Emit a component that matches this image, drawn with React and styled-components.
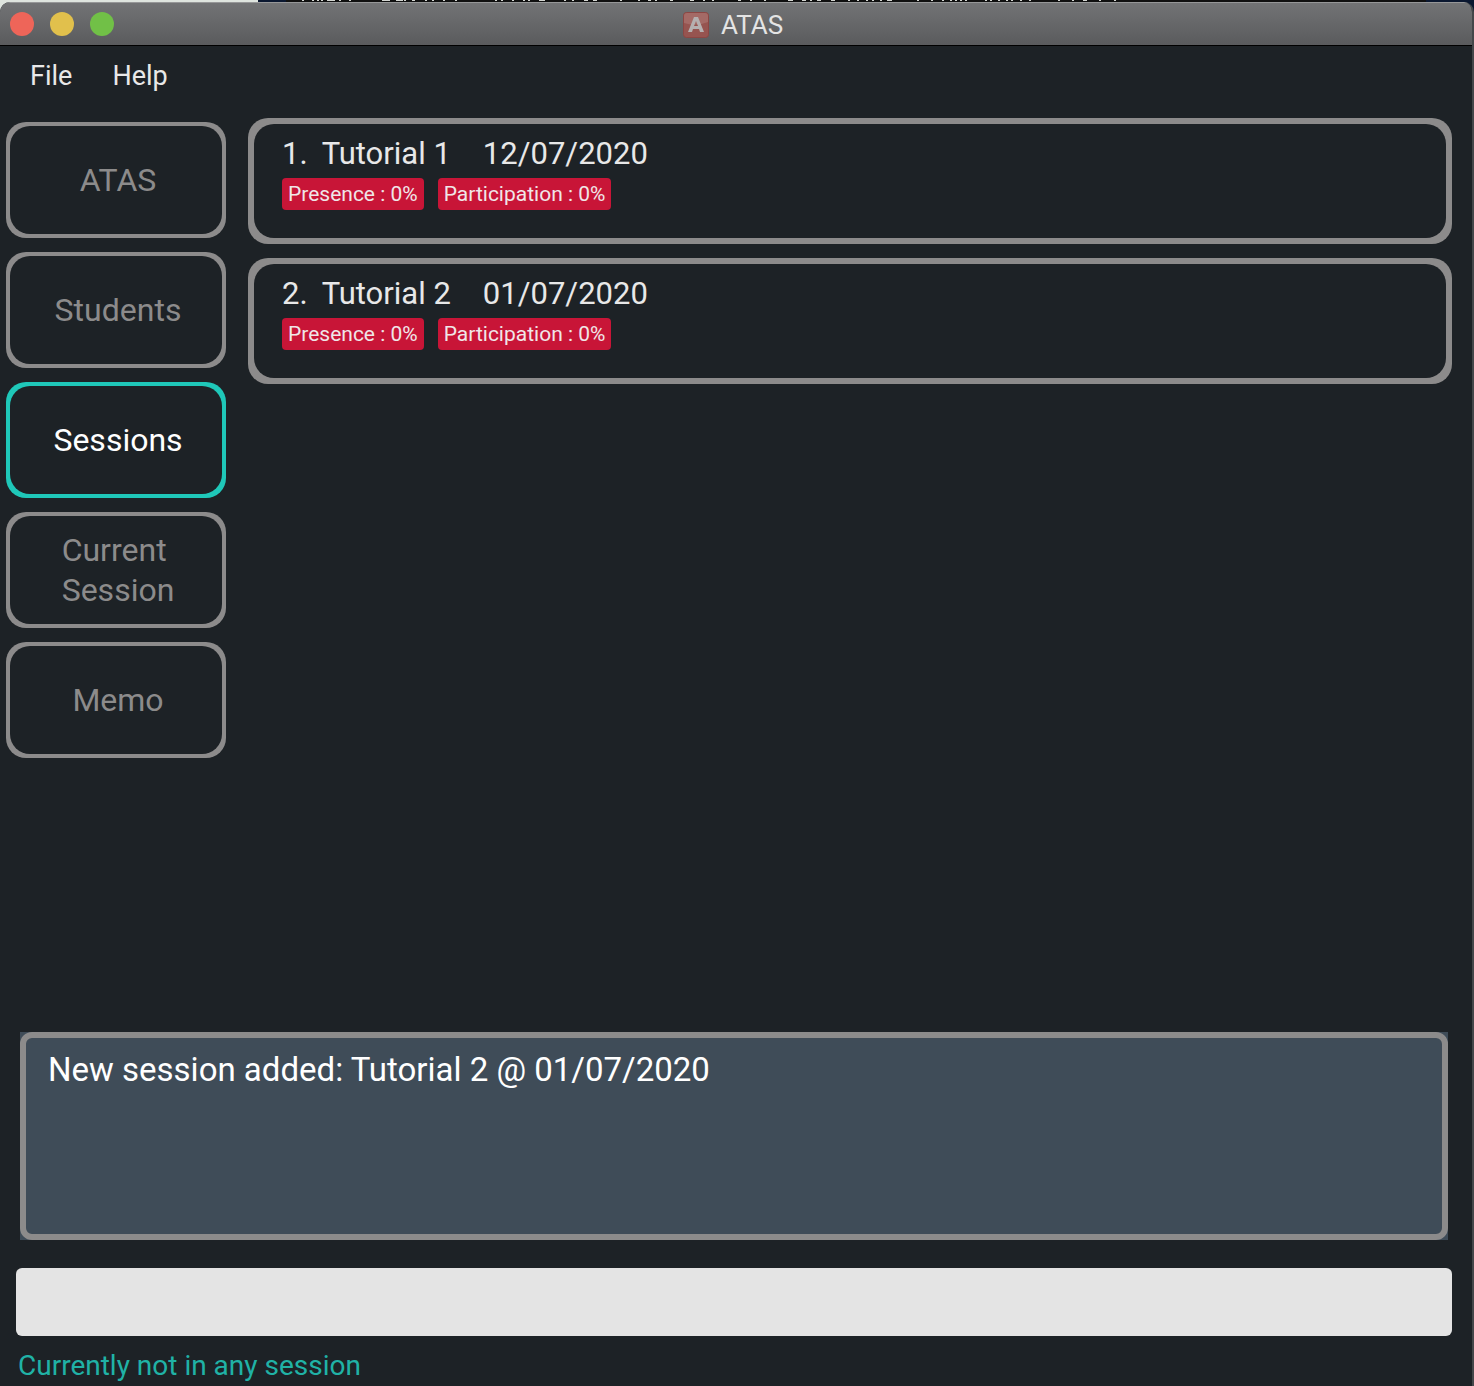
import React, { useState } from "react";
import styled, { createGlobalStyle } from "styled-components";

const GlobalStyle = createGlobalStyle`
  * { box-sizing: border-box; }
  html { height: 100%; }
  body {
    margin: 0;
    height: 100%;
    background: #1d2226;
    font-family: Roboto, "Liberation Sans", sans-serif;
  }
  #root { height: 100%; }
  button, input { font-family: inherit; }
`;

const Desktop = styled.div`
  display: flex;
  flex-direction: column;
  min-height: 100%;
  background: linear-gradient(to right, #dfe5df 258px, #0a1730 258px, #0a1730 286px, #101010 286px, #101010 1426px, #0a1730 1426px) top / 100% 12px no-repeat #000;
`;

const Terminal = styled.div`
  height: 2px;
  padding-left: 300px;
  overflow: hidden;

  svg { display: block; }
`;

const Window = styled.div`
  flex: 1;
  display: flex;
  flex-direction: column;
  background: #1d2226;
  border-right: 2px solid #44474a;
  border-radius: 10px 10px 0 0;
  overflow: hidden;
`;

const TitleBar = styled.header`
  display: grid;
  grid-template-columns: 1fr auto 1fr;
  align-items: center;
  height: 44px;
  padding: 0 16px 0 10px;
  background: linear-gradient(#727375, #5a5b5d);
  border-top: 1px solid #969798;
  border-bottom: 1px solid #000;
`;

const Lights = styled.div`
  display: flex;
  gap: 16px;
`;

const Light = styled.button`
  width: 24px;
  height: 24px;
  padding: 0;
  border: 0;
  border-radius: 50%;
  background: ${(p) => p.$color};
`;

const Title = styled.h1`
  display: flex;
  align-items: center;
  gap: 12px;
  margin: 0;
  padding-top: 2px;
  color: #e4e4e4;
  font-size: 26px;
  line-height: 32px;
  font-weight: 400;
`;

const MenuBar = styled.nav`
  display: flex;
  gap: 40px;
  padding: 12px 30px;
  margin-bottom: 12px;
`;

const MenuItem = styled.button`
  padding: 0;
  border: 0;
  background: none;
  color: #e8e8e8;
  font-size: 27px;
  line-height: 36px;
`;

const Body = styled.main`
  flex: 1;
  display: flex;
  gap: 22px;
  padding: 0 20px 0 6px;
`;

const Tabs = styled.nav`
  display: flex;
  flex-direction: column;
  gap: 14px;
  width: 220px;
  padding-top: 4px;
  flex-shrink: 0;
`;

const Tab = styled.button`
  display: flex;
  height: 116px;
  padding: 4px;
  border: 0;
  border-radius: 20px;
  background: ${(p) => (p.$active ? "#1fc8b9" : "#8c8b8b")};
  color: ${(p) => (p.$active ? "#ffffff" : "#8c8b8b")};
  font-size: 32px;
  line-height: 40px;
  text-align: left;
`;

const TabFace = styled.span`
  flex: 1;
  display: flex;
  align-items: center;
  justify-content: center;
  height: 100%;
  padding-left: 4px;
  border-radius: 20px;
  background: #1d2226;
`;

const TabLabel = styled.span`
  width: min-content;
`;

const SessionList = styled.ul`
  flex: 1;
  display: flex;
  flex-direction: column;
  gap: 14px;
  margin: 0;
  padding: 0;
  list-style: none;
`;

const SessionCard = styled.li`
  height: 126px;
  padding: 6px;
  border-radius: 20px;
  background: #8c8b8b;
`;

const CardFace = styled.article`
  height: 100%;
  padding: 10px 28px;
  border-radius: 20px;
  background: #1d2226;
`;

const SessionHeading = styled.h2`
  display: flex;
  margin: 0 0 4px;
  color: #e8e8e8;
  font-size: 31px;
  line-height: 40px;
  font-weight: 400;
`;

const Name = styled.span`
  margin: 0 32px 0 14px;
`;

const Tags = styled.div`
  display: flex;
  gap: 14px;
`;

const Tag = styled.span`
  padding: 0 6px;
  border-radius: 4px;
  background: #c81537;
  color: #f0e6e8;
  font-size: 21px;
  line-height: 32px;
`;

const Footer = styled.footer`
  display: flex;
  flex-direction: column;
  padding: 0 20px 0 16px;
`;

const ResultFrame = styled.div`
  margin: 0 4px 28px;
  background: #3f4c58;
`;

const Result = styled.output`
  display: block;
  height: 208px;
  padding: 12px 22px;
  border: 6px solid #8c8b8b;
  border-radius: 12px;
  color: #ffffff;
  font-size: 33px;
  line-height: 40px;
`;

const Command = styled.input`
  width: 100%;
  height: 68px;
  padding: 0 16px;
  border: 0;
  border-radius: 6px;
  background: #e4e4e4;
  color: #1d2226;
  font-size: 27px;
`;

const Status = styled.p`
  margin: 0;
  padding: 10px 2px 0;
  color: #20b2a6;
  font-size: 28px;
  line-height: 40px;
`;

const AppIcon = () => (
  <svg width="26" height="26" viewBox="0 0 26 26" aria-hidden="true">
    <rect x="0.5" y="0.5" width="25" height="25" rx="3" fill="#965450" stroke="#8c4643" />
    <path d="M1 4q0-3 3-3h18q3 0 3 3v6q-12 5-24 1z" fill="#a46a66" />
    <path fillRule="evenodd" d="M5 20 11 5h4l6 15h-4l-1-3h-6l-1 3zM11 14h4l-2-5z" fill="#b5b0b0" />
  </svg>
);

// Lower edges of the terminal line behind the window: [start, width]
const glyphEdges = [
  [2, 2], [12, 2], [17, 2], [21, 2], [27, 8], [39, 2], [49, 2], [82, 8], [96, 7],
  [104, 2], [112, 3], [125, 2], [132, 2], [143, 2], [155, 2], [195, 2], [201, 2],
  [212, 2], [223, 2], [228, 2], [239, 6], [264, 2], [272, 2], [284, 4], [293, 4],
  [320, 2], [338, 2], [348, 3], [355, 2], [370, 3], [390, 4], [403, 2], [412, 2],
  [438, 3], [450, 2], [464, 2], [488, 5], [502, 4], [510, 2], [517, 4], [531, 4],
  [548, 2], [557, 2], [566, 2], [572, 2], [580, 2], [587, 5], [617, 2], [631, 2],
  [642, 2], [650, 2], [655, 2], [660, 2], [665, 2], [685, 2], [690, 2], [698, 2],
  [706, 2], [711, 2], [720, 2], [729, 2], [758, 2], [772, 2], [783, 4], [799, 2],
  [814, 2],
];

const TerminalEdges = () => (
  <svg width="820" height="2" aria-hidden="true">
    <path fill="#d4d6d2" d={glyphEdges.map(([x, w]) => `M${x} 0h${w}v1h-${w}z`).join("")} />
  </svg>
);

const tabs = ["ATAS", "Students", "Sessions", "Current Session", "Memo"];
const sessions = [
  { name: "Tutorial 1", date: "12/07/2020", presence: 0, participation: 0 },
  { name: "Tutorial 2", date: "01/07/2020", presence: 0, participation: 0 },
];

export default function App() {
  const [active, setActive] = useState("Sessions");
  return (
    <Desktop>
      <GlobalStyle />
      <Terminal><TerminalEdges /></Terminal>
      <Window>
        <TitleBar>
          <Lights>
            <Light $color="#ee6559" aria-label="Close" />
            <Light $color="#e1c04c" aria-label="Minimize" />
            <Light $color="#71c047" aria-label="Zoom" />
          </Lights>
          <Title><AppIcon />ATAS</Title>
        </TitleBar>
        <MenuBar>
          <MenuItem>File</MenuItem>
          <MenuItem>Help</MenuItem>
        </MenuBar>
        <Body>
          <Tabs>
            {tabs.map((t) => (
              <Tab key={t} $active={t === active} onClick={() => setActive(t)}>
                <TabFace><TabLabel>{t}</TabLabel></TabFace>
              </Tab>
            ))}
          </Tabs>
          <SessionList>
            {sessions.map((s, i) => (
              <SessionCard key={s.name}>
                <CardFace>
                  <SessionHeading>
                    <span>{i + 1}.</span>
                    <Name>{s.name}</Name>
                    <span>{s.date}</span>
                  </SessionHeading>
                  <Tags>
                    <Tag>Presence : {s.presence}%</Tag>
                    <Tag>Participation : {s.participation}%</Tag>
                  </Tags>
                </CardFace>
              </SessionCard>
            ))}
          </SessionList>
        </Body>
        <Footer>
          <ResultFrame>
            <Result>New session added: Tutorial 2 @ 01/07/2020</Result>
          </ResultFrame>
          <Command type="text" aria-label="Command" />
          <Status>Currently not in any session</Status>
        </Footer>
      </Window>
    </Desktop>
  );
}
